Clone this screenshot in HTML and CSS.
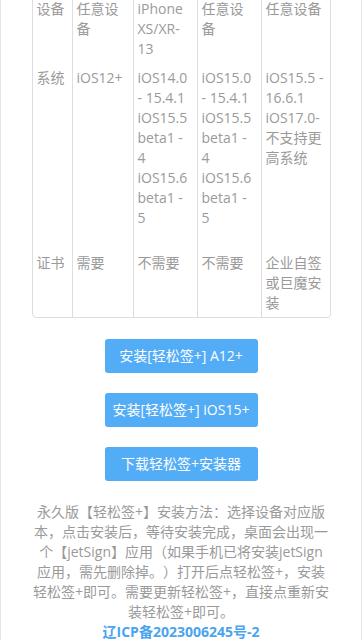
FILE: index.html
```html
<!DOCTYPE html>
<html lang="zh-CN">
<head>
  <meta charset="UTF-8" />
  <meta name="viewport" content="width=device-width, initial-scale=1.0"/>
  <title>轻松签+ 安装</title>
  <link rel="stylesheet" href="styles.css">
</head>
<body>
  <div class="page">
    <table class="devices">
      <colgroup>
        <col class="c-name">
        <col class="c-a">
        <col class="c-b">
        <col class="c-b">
        <col class="c-c">
      </colgroup>
      <tr>
        <td>设备</td>
        <td>任意设备</td>
        <td>iPhone XS/XR-13</td>
        <td>任意设备</td>
        <td>任意设备</td>
      </tr>
      <tr class="tall">
        <td>系统</td>
        <td>iOS12+</td>
        <td>iOS14.0 - 15.4.1<br>iOS15.5 beta1 - 4<br>iOS15.6 beta1 - 5</td>
        <td>iOS15.0 - 15.4.1<br>iOS15.5 beta1 - 4<br>iOS15.6 beta1 - 5</td>
        <td>iOS15.5 - 16.6.1<br>iOS17.0-不支持更高系统</td>
      </tr>
      <tr>
        <td>证书</td>
        <td>需要</td>
        <td>不需要</td>
        <td>不需要</td>
        <td>企业自签或巨魔安装</td>
      </tr>
    </table>

    <div class="actions">
      <a class="btn" href="#">安装[轻松签+] A12+</a>
      <a class="btn" href="#">安装[轻松签+] iOS15+</a>
      <a class="btn" href="#">下载轻松签+安装器</a>
    </div>

    <p class="tips">永久版【轻松签+】安装方法：选择设备对应版本，点击安装后，等待安装完成，桌面会出现一个【jetSign】应用（如果手机已将安装jetSign应用，需先删除掉。）打开后点轻松签+，安装轻松签+即可。需要更新轻松签+，直接点重新安装轻松签+即可。</p>
    <a class="icp" href="#">辽ICP备2023006245号-2</a>
  </div>
</body>
</html>
```

FILE: styles.css
```css
:root {
  --azul: #52acf6;
  --azul-link: #4aa4ee;
  --cinza-texto: #9a9a9a;
  --borda: #dedede;
}

* {
  box-sizing: border-box;
}

body {
  margin: 0;
  font-family: "Open Sans", "Noto Sans CJK SC", sans-serif;
  font-size: 14px;
  line-height: 20px;
  color: var(--cinza-texto);
  background: #fff;
  text-spacing-trim: space-all;
}

.page {
  min-height: 100vh;
  border-left: 1px solid #e6e6e6;
  border-right: 1px solid #e6e6e6;
  text-align: center;
}

.devices {
  width: 299px;
  margin: -7px auto 0;
  table-layout: fixed;
  border-collapse: separate;
  border-spacing: 0;
  border: 1px solid var(--borda);
  border-radius: 0 0 4px 4px;
  text-align: left;
}

.c-name { width: 39px; }
.c-a { width: 61px; }
.c-b { width: 64px; }
.c-c { width: 69px; }

.devices td {
  vertical-align: top;
  padding: 5px 4px 4px 4px;
  border-left: 1px solid var(--borda);
}

.devices td:first-child {
  border-left: none;
}

.devices .tall td {
  padding-bottom: 20px;
}

.actions {
  display: flex;
  flex-direction: column;
  align-items: center;
  gap: 20px;
  margin-top: 21px;
}

.btn {
  display: block;
  width: 153px;
  height: 34px;
  line-height: 34px;
  background: var(--azul);
  color: #fff;
  border-radius: 3px;
  text-decoration: none;
  font-size: 14px;
}

.tips {
  margin: 21px 0 0;
  padding: 0 32px;
}

.icp {
  display: block;
  color: var(--azul-link);
  font-weight: bold;
  text-decoration: none;
}
```
